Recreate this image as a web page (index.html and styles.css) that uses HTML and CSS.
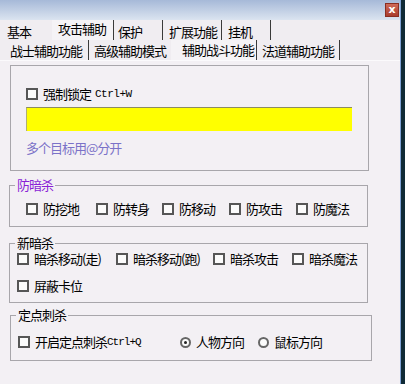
FILE: index.html
```html
<!DOCTYPE html>
<html lang="zh">
<head>
    <meta charset="UTF-8">
    <title>攻击辅助</title>
    <link rel="stylesheet" href="styles.css">
</head>
<body>
    <div class="window">
        <div class="titlebar">
            <span class="close">x</span>
        </div>
        <div class="tabs tabs-main">
            <span class="tab t1">基本</span>
            <span class="tab t2 active">攻击辅助</span>
            <span class="tab t3">保护</span>
            <span class="tab t4">扩展功能</span>
            <span class="tab t5">挂机</span>
        </div>
        <div class="tabs tabs-sub">
            <span class="tab s1">战士辅助功能</span>
            <span class="tab s2">高级辅助模式</span>
            <span class="tab s3 active">辅助战斗功能</span>
            <span class="tab s4">法道辅助功能</span>
        </div>
        <div class="panel">
            <div class="box lock">
                <label class="check"><span class="cb"></span>强制锁定 <span class="mono">Ctrl+W</span></label>
                <div class="yellow-input"></div>
                <div class="hint">多个目标用@分开</div>
            </div>

            <fieldset class="group anti">
                <legend class="purple">防暗杀</legend>
                <div class="row">
                    <label class="check"><span class="cb"></span>防挖地</label>
                    <label class="check"><span class="cb"></span>防转身</label>
                    <label class="check"><span class="cb"></span>防移动</label>
                    <label class="check"><span class="cb"></span>防攻击</label>
                    <label class="check"><span class="cb"></span>防魔法</label>
                </div>
            </fieldset>

            <fieldset class="group assassin">
                <legend>新暗杀</legend>
                <div class="row">
                    <label class="check"><span class="cb"></span>暗杀移动(走)</label>
                    <label class="check"><span class="cb"></span>暗杀移动(跑)</label>
                    <label class="check"><span class="cb"></span>暗杀攻击</label>
                    <label class="check"><span class="cb"></span>暗杀魔法</label>
                    <label class="check wide"><span class="cb"></span>屏蔽卡位</label>
                </div>
            </fieldset>

            <fieldset class="group fixed">
                <legend>定点刺杀</legend>
                <div class="row">
                    <label class="check"><span class="cb"></span>开启定点刺杀<span class="mono">Ctrl+Q</span></label>
                    <label class="check"><span class="rb on"></span>人物方向</label>
                    <label class="check"><span class="rb"></span>鼠标方向</label>
                </div>
            </fieldset>
        </div>
    </div>
</body>
</html>
```

FILE: styles.css
```css
body {
    margin: 0;
    background-color: #0f2a36;
    font-family: "Noto Sans CJK SC", "DejaVu Sans", sans-serif;
    font-size: 13px;
    letter-spacing: -1px;
    color: #000;
}
.window {
    width: 400px;
    height: 384px;
    border-right: 1px solid #7fa2d6;
    background-color: #f3f0f4;
    display: flex;
    flex-direction: column;
}
.titlebar {
    height: 20px;
    background: linear-gradient(#a6b9d8, #dbe4f0);
    display: flex;
    justify-content: flex-end;
    align-items: flex-start;
    padding-right: 1px;
    box-sizing: border-box;
}
.close {
    width: 14px;
    height: 14px;
    margin-top: 3px;
    box-sizing: border-box;
    border: 1px solid #8a2e22;
    background: linear-gradient(#cf6a58, #a93c2d);
    color: white;
    font-family: "DejaVu Sans", sans-serif;
    font-weight: bold;
    font-size: 11px;
    letter-spacing: 0;
    line-height: 11px;
    text-align: center;
}
.tabs {
    display: flex;
    height: 20px;
    background-color: #f0edf1;
}
.tab {
    box-sizing: border-box;
    height: 20px;
    line-height: 22px;
    padding-left: 3px;
    border-right: 1px solid #3a3a3a;
    white-space: nowrap;
}
.tab.active {
    background-color: #f5f3f6;
}
.tabs-main .tab { line-height: 23px; }
.tabs-main .tab.active { line-height: 17px; }
.t1 { width: 48px; margin-left: 4px; border-right: none; }
.t2 { width: 62px; padding-left: 6px; }
.t3 { width: 48px; margin-left: 1px; }
.t4 { width: 56px; margin-left: 3px; }
.t5 { width: 46px; margin-left: 3px; }
.s1 { width: 82px; margin-left: 7px; padding-left: 3px; }
.s2 { width: 82px; padding-left: 5px; border-right: none; }
.s3 { width: 86px; padding-left: 11px; line-height: 19px; }
.s4 { width: 82px; margin-left: 1px; padding-left: 4px; }

.panel {
    flex: 1;
    padding: 4px 0 0 9px;
    border-top: 1px solid #fbfafc;
}
.box {
    box-sizing: border-box;
    width: 359px;
    height: 106px;
    margin-left: 1px;
    border: 1px solid #a8a6ab;
    padding: 21px 0 0 15px;
}
.check {
    display: flex;
    align-items: center;
    height: 14px;
    line-height: 14px;
    white-space: nowrap;
}
.cb {
    box-sizing: border-box;
    width: 12px;
    height: 12px;
    margin-right: 5px;
    border: 2px solid #565656;
    background-color: #fbfbfb;
    flex: none;
}
.rb {
    box-sizing: border-box;
    width: 11px;
    height: 11px;
    margin-right: 5px;
    border: 2px solid #666;
    border-radius: 50%;
    background-color: #fbfbfb;
    flex: none;
    display: flex;
    align-items: center;
    justify-content: center;
}
.rb.on::after {
    content: "";
    width: 3px;
    height: 3px;
    border-radius: 50%;
    background-color: #222;
}
.mono {
    font-family: "Liberation Mono", monospace;
    font-size: 11px;
    letter-spacing: -0.5px;
    margin-left: 4px;
}
.fixed .mono { margin-left: 0; letter-spacing: -1px; }
.yellow-input {
    width: 326px;
    height: 24px;
    margin-top: 6px;
    box-sizing: border-box;
    background-color: #ffff00;
    border-top: 1px solid #8c8c60;
    border-left: 1px solid #b0b070;
}
.hint {
    margin-top: 10px;
    color: #7b72c8;
    line-height: 14px;
}

.group {
    margin: 0;
    padding: 0;
    border: 1px solid #a8a6ab;
    box-sizing: border-box;
    width: 359px;
}
.group legend {
    margin-left: 5px;
    padding: 0 2px;
    line-height: 14px;
}
.purple { color: #8a1fd6; }
.row {
    display: grid;
}
.anti {
    margin-top: 7px;
    height: 49px;
}
.anti .row {
    grid-template-columns: 70px 66px 67px 67px auto;
    padding: 10px 0 0 16px;
}
.assassin {
    margin-top: 9px;
    height: 67px;
}
.assassin .row {
    grid-template-columns: 99px 97px 79px auto;
    row-gap: 13px;
    padding: 2px 0 0 7px;
}
.fixed {
    margin-top: 5px;
    margin-left: 1px;
    width: 362px;
    height: 53px;
}
.fixed .row {
    grid-template-columns: 162px 78px auto;
    padding: 13px 0 0 7px;
}
```
